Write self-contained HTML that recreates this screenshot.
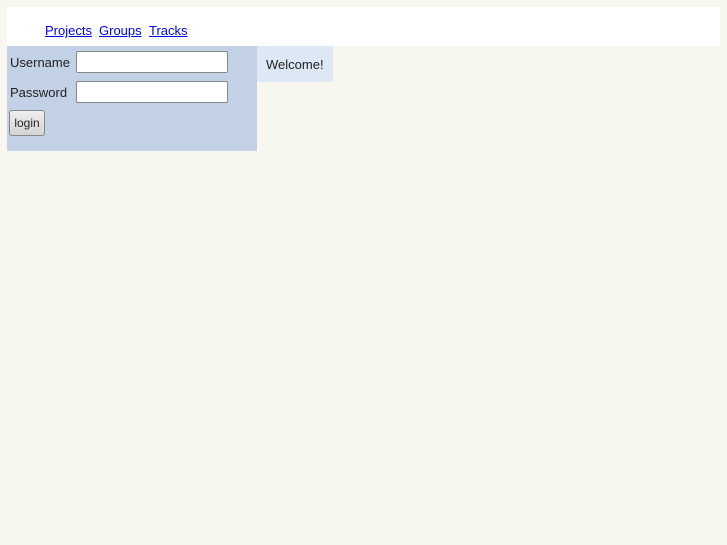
<!DOCTYPE html>
<html><head><style>
body{margin:0;background:#f8f7ef;font-family:"Liberation Sans",sans-serif;font-size:13px;color:#222;}
#hdr{position:absolute;left:7px;top:7px;width:713px;height:39px;background:#fff;}
#hdr a{position:absolute;top:16px;color:#0000ee;text-decoration:underline;font-size:13px;}
#left{position:absolute;left:7px;top:46px;width:250px;height:105px;background:#c2d1e5;}
#wel{position:absolute;left:257px;top:46px;width:76px;height:36px;background:#dce8f4;}
.lbl{position:absolute;left:3px;}
.inp{position:absolute;left:69px;width:150px;height:20px;background:#fff;border:1px solid #888;border-radius:2px;}
.btn{position:absolute;left:2px;top:64px;width:34px;height:24px;border:1px solid #888;border-radius:3px;background:linear-gradient(#eee,#d4d4d4);font-size:12px;text-align:center;line-height:24px;}
</style></head><body>
<div id="hdr">
<a style="left:38px">Projects</a><a style="left:92px">Groups</a><a style="left:142px">Tracks</a>
</div>
<div id="left">
<span class="lbl" style="top:9px">Username</span>
<div class="inp" style="top:5px"></div>
<span class="lbl" style="top:39px">Password</span>
<div class="inp" style="top:35px"></div>
<div class="btn">login</div>
</div>
<div id="wel"><span style="position:absolute;left:9px;top:11px">Welcome!</span></div>
</body></html>
